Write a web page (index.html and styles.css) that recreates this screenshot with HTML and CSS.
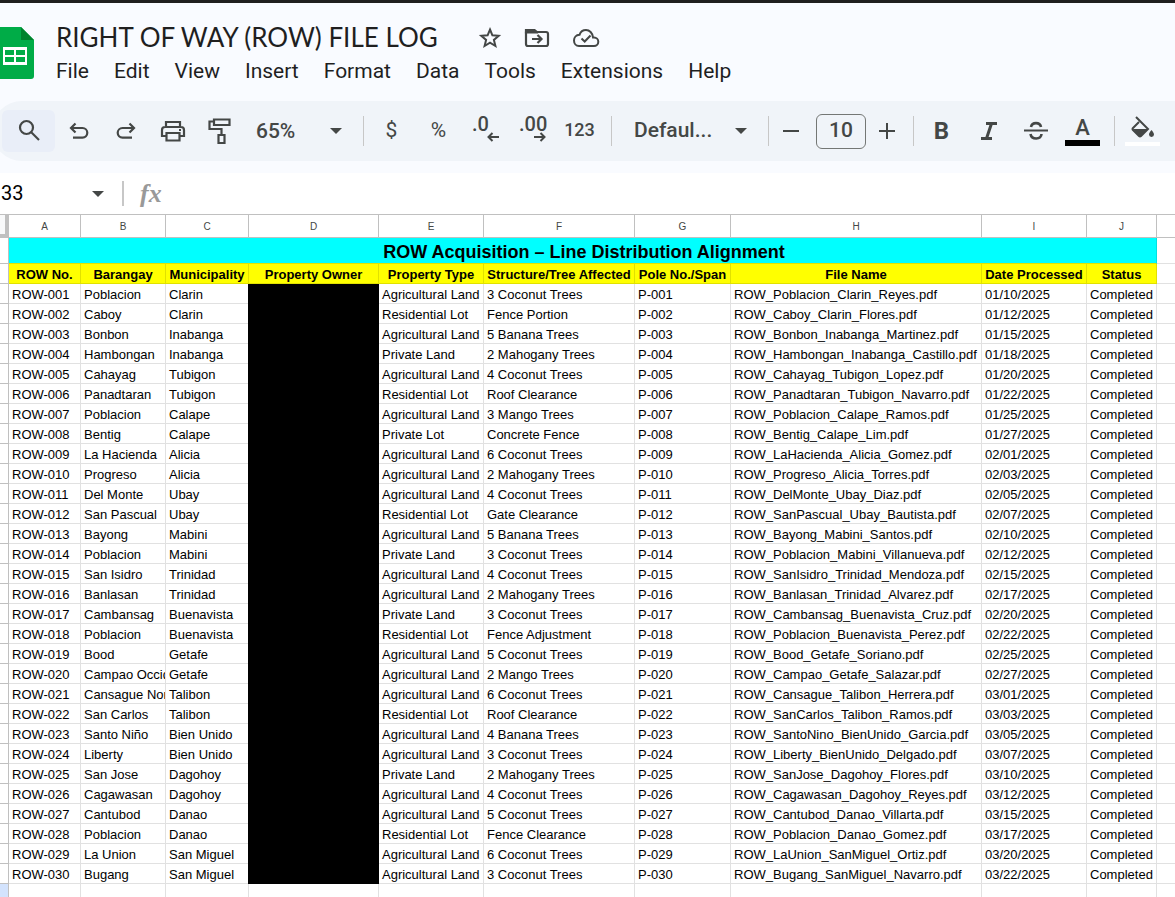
FILE: index.html
```html
<!DOCTYPE html>
<html lang="en">
<head>
    <meta charset="UTF-8">
    <meta name="viewport" content="width=device-width, initial-scale=1.0">
    <title>RIGHT OF WAY (ROW) FILE LOG</title>
    <link rel="stylesheet" href="styles.css">
</head>
<body>
    <header class="top">
        <div class="doc-bar">
            <a class="logo" href="#" aria-label="Sheets home">
                <svg width="40" height="52" viewBox="0 0 40 52">
                    <path d="M4 0H27L40 13V49Q40 52 37 52H4Q0 52 0 48V4Q0 0 4 0Z" fill="#00ac47"/>
                    <path d="M27 0L40 13H27Z" fill="#00832d"/>
                    <path d="M9 20H33V38H9ZM11 23V28H20V23ZM22 23V28H31V23ZM11 30V35H20V30ZM22 30V35H31V30Z" fill="#fff" fill-rule="evenodd"/>
                </svg>
            </a>
            <div class="doc-info">
                <div class="title-row">
                    <input class="doc-title" type="text" value="RIGHT OF WAY (ROW) FILE LOG" aria-label="Document title">
                    <button class="icon-btn" aria-label="Star">
                        <svg width="24" height="24" viewBox="0 0 24 24" fill="none" stroke="#444746" stroke-width="2"><path d="M12 3.5L14.4 9.3L20.7 9.8L15.9 13.9L17.4 20L12 16.7L6.6 20L8.1 13.9L3.3 9.8L9.6 9.3Z"/></svg>
                    </button>
                    <button class="icon-btn" aria-label="Move">
                        <svg width="26" height="24" viewBox="0 0 26 24" fill="none" stroke="#444746" stroke-width="2.200"><path d="M2 6V18Q2 20 4 20H22Q24 20 24 18V8Q24 6 22 6H13L10.500 4H4Q2 4 2 6Z"/><path d="M2 4H10L12 6.500H2Z" fill="#444746"/><path d="M8 13H17M13.500 9L17.500 13L13.500 17"/></svg>
                    </button>
                    <button class="icon-btn" aria-label="Saved to Drive">
                        <svg width="28" height="24" viewBox="0 0 28 24" fill="none" stroke="#444746" stroke-width="2"><path d="M7 20H22A4.300 4.300 0 0 0 22 11.400H21C20.500 7 17.500 4 14 4C10.500 4 8.500 6 7.500 8.800C4 9 2 11.500 2 14.500C2 17.500 4 20 7 20Z"/><path d="M9.500 12.500L12.700 15.500L18.500 9.500"/></svg>
                    </button>
                </div>
                <nav class="menu">
                    <button>File</button>
                    <button>Edit</button>
                    <button>View</button>
                    <button>Insert</button>
                    <button>Format</button>
                    <button>Data</button>
                    <button>Tools</button>
                    <button>Extensions</button>
                    <button>Help</button>
                </nav>
            </div>
        </div>

        <!-- Toolbar -->
        <div class="toolbar">
            <button class="search" aria-label="Search the menus">
                <svg width="24" height="24" viewBox="0 0 24 24" fill="none" stroke="#444746" stroke-width="2.200"><circle cx="9.500" cy="8.500" r="6.500"/><path d="M14 13L22 21"/></svg>
            </button>
            <button class="tool" aria-label="Undo">
                <svg width="24" height="24" viewBox="0 0 24 24" fill="none" stroke="#444746" stroke-width="2.200"><path d="M8.500 4.500L4 9L8.500 13.500M4 9H15.500A4.800 4.800 0 0 1 15.500 18.600H6"/></svg>
            </button>
            <button class="tool" aria-label="Redo">
                <svg width="24" height="24" viewBox="0 0 24 24" fill="none" stroke="#444746" stroke-width="2.200"><path d="M15.500 4.500L20 9L15.500 13.500M20 9H8.500A4.800 4.800 0 0 0 8.500 18.600H18"/></svg>
            </button>
            <button class="tool" aria-label="Print">
                <svg width="26" height="24" viewBox="0 0 26 24" fill="none" stroke="#444746" stroke-width="2.200"><path d="M6 8V3H20V8M6 17H2V11Q2 8 5 8H21Q24 8 24 11V17H20"/><path d="M6.500 14H19.500V21.500H6.500Z"/><path d="M19 11H21"/></svg>
            </button>
            <button class="tool" aria-label="Paint format">
                <svg width="24" height="28" viewBox="0 0 24 28" fill="none" stroke="#444746" stroke-width="2.200"><path d="M6 2.500H21.500V8H6ZM6 4.500H1.500V12H13.500V18M10.500 18H16.500V26H10.500Z"/></svg>
            </button>
            <div class="picker zoom">
                <select aria-label="Zoom"><option>65%</option></select>
                <svg class="arrow" width="12" height="6" viewBox="0 0 12 6"><path d="M0 0H12L6 6Z" fill="#444746"/></svg>
            </div>
            <span class="sep"></span>
            <button class="tool symbol">$</button>
            <button class="tool symbol">%</button>
            <button class="tool decimal" aria-label="Decrease decimal places"><span>.0</span>
                <svg width="12" height="10" viewBox="0 0 12 10" fill="none" stroke="#444746" stroke-width="2"><path d="M12 5H2M5.500 1L1.500 5L5.500 9"/></svg>
            </button>
            <button class="tool decimal" aria-label="Increase decimal places"><span>.00</span>
                <svg width="12" height="10" viewBox="0 0 12 10" fill="none" stroke="#444746" stroke-width="2"><path d="M0 5H10M6.500 1L10.500 5L6.500 9"/></svg>
            </button>
            <button class="tool format">123</button>
            <span class="sep"></span>
            <div class="picker font">
                <select aria-label="Font"><option>Defaul...</option></select>
                <svg class="arrow" width="12" height="6" viewBox="0 0 12 6"><path d="M0 0H12L6 6Z" fill="#444746"/></svg>
            </div>
            <span class="sep"></span>
            <button class="step" aria-label="Decrease font size">
                <svg width="16" height="16" viewBox="0 0 16 16" stroke="#444746" stroke-width="2"><path d="M0 8H16"/></svg>
            </button>
            <input class="size" type="text" value="10" aria-label="Font size">
            <button class="step" aria-label="Increase font size">
                <svg width="16" height="16" viewBox="0 0 16 16" stroke="#444746" stroke-width="2"><path d="M0 8H16M8 0V16"/></svg>
            </button>
            <span class="sep"></span>
            <button class="tool bold">B</button>
            <button class="tool" aria-label="Italic">
                <svg width="16" height="18" viewBox="0 0 16 18" fill="none" stroke="#444746" stroke-width="3"><path d="M5 1.500H16M0 16.500H11M10.500 1.500L5.500 16.500"/></svg>
            </button>
            <button class="tool" aria-label="Strikethrough">
                <svg width="24" height="20" viewBox="0 0 24 20" fill="none" stroke="#444746" stroke-width="2.600"><path d="M0 9.500H24" stroke-width="2"/><path d="M17 6C16 0.800 8 0.800 7 6M6.500 13C7.500 19 17 19 17.500 13"/></svg>
            </button>
            <button class="tool swatch"><span>A</span></button>
            <span class="sep"></span>
            <button class="tool swatch fill-color" aria-label="Fill color">
                <svg width="24" height="24" viewBox="0 0 24 24"><path d="M5 1L17 13L10 20Q9 21 8 20L2 14Q1 13 2 12L8 6" fill="none" stroke="#444746" stroke-width="2"/><path d="M2 13H17L10 20Q9 21 8 20Z" fill="#444746"/><path d="M20.500 14C22 16 23 17 23 18.500A2.500 2.500 0 0 1 18 18.500C18 17 19 16 20.500 14Z" fill="#444746"/></svg>
            </button>
        </div>
    </header>

    <!-- Name box and formula bar -->
    <div class="formula-bar">
        <input class="name-box" type="text" value="33" aria-label="Name box">
        <svg width="12" height="6" viewBox="0 0 12 6"><path d="M0 0H12L6 6Z" fill="#444746"/></svg>
        <span class="bar"></span>
        <label class="fx" for="formula">fx</label>
        <input class="formula" id="formula" type="text">
    </div>

    <main class="sheet">
        <table>
            <colgroup>
                <col class="w-num"><col class="w-a"><col class="w-b"><col class="w-c"><col class="w-d"><col class="w-e"><col class="w-f"><col class="w-g"><col class="w-h"><col class="w-i"><col class="w-j"><col>
            </colgroup>
            <thead>
                <tr class="letters"><th class="corner"></th><th>A</th><th>B</th><th>C</th><th>D</th><th>E</th><th>F</th><th>G</th><th>H</th><th>I</th><th>J</th><th></th></tr>
            </thead>
            <tbody>
                <tr class="heading"><th></th><td colspan="10">ROW Acquisition – Line Distribution Alignment</td><td></td></tr>
                <tr class="labels"><th></th><td>ROW No.</td><td>Barangay</td><td>Municipality</td><td>Property Owner</td><td>Property Type</td><td>Structure/Tree Affected</td><td>Pole No./Span</td><td>File Name</td><td>Date Processed</td><td>Status</td><td></td></tr>
                <tr><th></th><td>ROW-001</td><td>Poblacion</td><td>Clarin</td><td class="owner"></td><td>Agricultural Land</td><td>3 Coconut Trees</td><td>P-001</td><td>ROW_Poblacion_Clarin_Reyes.pdf</td><td>01/10/2025</td><td>Completed</td><td></td></tr>
                <tr><th></th><td>ROW-002</td><td>Caboy</td><td>Clarin</td><td class="owner"></td><td>Residential Lot</td><td>Fence Portion</td><td>P-002</td><td>ROW_Caboy_Clarin_Flores.pdf</td><td>01/12/2025</td><td>Completed</td><td></td></tr>
                <tr><th></th><td>ROW-003</td><td>Bonbon</td><td>Inabanga</td><td class="owner"></td><td>Agricultural Land</td><td>5 Banana Trees</td><td>P-003</td><td>ROW_Bonbon_Inabanga_Martinez.pdf</td><td>01/15/2025</td><td>Completed</td><td></td></tr>
                <tr><th></th><td>ROW-004</td><td>Hambongan</td><td>Inabanga</td><td class="owner"></td><td>Private Land</td><td>2 Mahogany Trees</td><td>P-004</td><td>ROW_Hambongan_Inabanga_Castillo.pdf</td><td>01/18/2025</td><td>Completed</td><td></td></tr>
                <tr><th></th><td>ROW-005</td><td>Cahayag</td><td>Tubigon</td><td class="owner"></td><td>Agricultural Land</td><td>4 Coconut Trees</td><td>P-005</td><td>ROW_Cahayag_Tubigon_Lopez.pdf</td><td>01/20/2025</td><td>Completed</td><td></td></tr>
                <tr><th></th><td>ROW-006</td><td>Panadtaran</td><td>Tubigon</td><td class="owner"></td><td>Residential Lot</td><td>Roof Clearance</td><td>P-006</td><td>ROW_Panadtaran_Tubigon_Navarro.pdf</td><td>01/22/2025</td><td>Completed</td><td></td></tr>
                <tr><th></th><td>ROW-007</td><td>Poblacion</td><td>Calape</td><td class="owner"></td><td>Agricultural Land</td><td>3 Mango Trees</td><td>P-007</td><td>ROW_Poblacion_Calape_Ramos.pdf</td><td>01/25/2025</td><td>Completed</td><td></td></tr>
                <tr><th></th><td>ROW-008</td><td>Bentig</td><td>Calape</td><td class="owner"></td><td>Private Lot</td><td>Concrete Fence</td><td>P-008</td><td>ROW_Bentig_Calape_Lim.pdf</td><td>01/27/2025</td><td>Completed</td><td></td></tr>
                <tr><th></th><td>ROW-009</td><td>La Hacienda</td><td>Alicia</td><td class="owner"></td><td>Agricultural Land</td><td>6 Coconut Trees</td><td>P-009</td><td>ROW_LaHacienda_Alicia_Gomez.pdf</td><td>02/01/2025</td><td>Completed</td><td></td></tr>
                <tr><th></th><td>ROW-010</td><td>Progreso</td><td>Alicia</td><td class="owner"></td><td>Agricultural Land</td><td>2 Mahogany Trees</td><td>P-010</td><td>ROW_Progreso_Alicia_Torres.pdf</td><td>02/03/2025</td><td>Completed</td><td></td></tr>
                <tr><th></th><td>ROW-011</td><td>Del Monte</td><td>Ubay</td><td class="owner"></td><td>Agricultural Land</td><td>4 Coconut Trees</td><td>P-011</td><td>ROW_DelMonte_Ubay_Diaz.pdf</td><td>02/05/2025</td><td>Completed</td><td></td></tr>
                <tr><th></th><td>ROW-012</td><td>San Pascual</td><td>Ubay</td><td class="owner"></td><td>Residential Lot</td><td>Gate Clearance</td><td>P-012</td><td>ROW_SanPascual_Ubay_Bautista.pdf</td><td>02/07/2025</td><td>Completed</td><td></td></tr>
                <tr><th></th><td>ROW-013</td><td>Bayong</td><td>Mabini</td><td class="owner"></td><td>Agricultural Land</td><td>5 Banana Trees</td><td>P-013</td><td>ROW_Bayong_Mabini_Santos.pdf</td><td>02/10/2025</td><td>Completed</td><td></td></tr>
                <tr><th></th><td>ROW-014</td><td>Poblacion</td><td>Mabini</td><td class="owner"></td><td>Private Land</td><td>3 Coconut Trees</td><td>P-014</td><td>ROW_Poblacion_Mabini_Villanueva.pdf</td><td>02/12/2025</td><td>Completed</td><td></td></tr>
                <tr><th></th><td>ROW-015</td><td>San Isidro</td><td>Trinidad</td><td class="owner"></td><td>Agricultural Land</td><td>4 Coconut Trees</td><td>P-015</td><td>ROW_SanIsidro_Trinidad_Mendoza.pdf</td><td>02/15/2025</td><td>Completed</td><td></td></tr>
                <tr><th></th><td>ROW-016</td><td>Banlasan</td><td>Trinidad</td><td class="owner"></td><td>Agricultural Land</td><td>2 Mahogany Trees</td><td>P-016</td><td>ROW_Banlasan_Trinidad_Alvarez.pdf</td><td>02/17/2025</td><td>Completed</td><td></td></tr>
                <tr><th></th><td>ROW-017</td><td>Cambansag</td><td>Buenavista</td><td class="owner"></td><td>Private Land</td><td>3 Coconut Trees</td><td>P-017</td><td>ROW_Cambansag_Buenavista_Cruz.pdf</td><td>02/20/2025</td><td>Completed</td><td></td></tr>
                <tr><th></th><td>ROW-018</td><td>Poblacion</td><td>Buenavista</td><td class="owner"></td><td>Residential Lot</td><td>Fence Adjustment</td><td>P-018</td><td>ROW_Poblacion_Buenavista_Perez.pdf</td><td>02/22/2025</td><td>Completed</td><td></td></tr>
                <tr><th></th><td>ROW-019</td><td>Bood</td><td>Getafe</td><td class="owner"></td><td>Agricultural Land</td><td>5 Coconut Trees</td><td>P-019</td><td>ROW_Bood_Getafe_Soriano.pdf</td><td>02/25/2025</td><td>Completed</td><td></td></tr>
                <tr><th></th><td>ROW-020</td><td>Campao Occid</td><td>Getafe</td><td class="owner"></td><td>Agricultural Land</td><td>2 Mango Trees</td><td>P-020</td><td>ROW_Campao_Getafe_Salazar.pdf</td><td>02/27/2025</td><td>Completed</td><td></td></tr>
                <tr><th></th><td>ROW-021</td><td>Cansague Nor</td><td>Talibon</td><td class="owner"></td><td>Agricultural Land</td><td>6 Coconut Trees</td><td>P-021</td><td>ROW_Cansague_Talibon_Herrera.pdf</td><td>03/01/2025</td><td>Completed</td><td></td></tr>
                <tr><th></th><td>ROW-022</td><td>San Carlos</td><td>Talibon</td><td class="owner"></td><td>Residential Lot</td><td>Roof Clearance</td><td>P-022</td><td>ROW_SanCarlos_Talibon_Ramos.pdf</td><td>03/03/2025</td><td>Completed</td><td></td></tr>
                <tr><th></th><td>ROW-023</td><td>Santo Niño</td><td>Bien Unido</td><td class="owner"></td><td>Agricultural Land</td><td>4 Banana Trees</td><td>P-023</td><td>ROW_SantoNino_BienUnido_Garcia.pdf</td><td>03/05/2025</td><td>Completed</td><td></td></tr>
                <tr><th></th><td>ROW-024</td><td>Liberty</td><td>Bien Unido</td><td class="owner"></td><td>Agricultural Land</td><td>3 Coconut Trees</td><td>P-024</td><td>ROW_Liberty_BienUnido_Delgado.pdf</td><td>03/07/2025</td><td>Completed</td><td></td></tr>
                <tr><th></th><td>ROW-025</td><td>San Jose</td><td>Dagohoy</td><td class="owner"></td><td>Private Land</td><td>2 Mahogany Trees</td><td>P-025</td><td>ROW_SanJose_Dagohoy_Flores.pdf</td><td>03/10/2025</td><td>Completed</td><td></td></tr>
                <tr><th></th><td>ROW-026</td><td>Cagawasan</td><td>Dagohoy</td><td class="owner"></td><td>Agricultural Land</td><td>4 Coconut Trees</td><td>P-026</td><td>ROW_Cagawasan_Dagohoy_Reyes.pdf</td><td>03/12/2025</td><td>Completed</td><td></td></tr>
                <tr><th></th><td>ROW-027</td><td>Cantubod</td><td>Danao</td><td class="owner"></td><td>Agricultural Land</td><td>5 Coconut Trees</td><td>P-027</td><td>ROW_Cantubod_Danao_Villarta.pdf</td><td>03/15/2025</td><td>Completed</td><td></td></tr>
                <tr><th></th><td>ROW-028</td><td>Poblacion</td><td>Danao</td><td class="owner"></td><td>Residential Lot</td><td>Fence Clearance</td><td>P-028</td><td>ROW_Poblacion_Danao_Gomez.pdf</td><td>03/17/2025</td><td>Completed</td><td></td></tr>
                <tr><th></th><td>ROW-029</td><td>La Union</td><td>San Miguel</td><td class="owner"></td><td>Agricultural Land</td><td>6 Coconut Trees</td><td>P-029</td><td>ROW_LaUnion_SanMiguel_Ortiz.pdf</td><td>03/20/2025</td><td>Completed</td><td></td></tr>
                <tr><th></th><td>ROW-030</td><td>Bugang</td><td>San Miguel</td><td class="owner"></td><td>Agricultural Land</td><td>3 Coconut Trees</td><td>P-030</td><td>ROW_Bugang_SanMiguel_Navarro.pdf</td><td>03/22/2025</td><td>Completed</td><td></td></tr>
                <tr><th class="selected"></th><td></td><td></td><td></td><td></td><td></td><td></td><td></td><td></td><td></td><td></td><td></td></tr>
            </tbody>
        </table>
    </main>
</body>
</html>
```
FILE: styles.css
```css
* {
    box-sizing: border-box;
}
body {
    display: flex;
    flex-direction: column;
    height: 100vh;
    margin: 0;
    overflow: hidden;
    background-color: #fff;
    color: #1f1f1f;
    font-family: Roboto, sans-serif;
}
button, input, select {
    margin: 0;
    padding: 0;
    border: none;
    background: none;
    color: inherit;
    font-family: inherit;
}
button {
    cursor: pointer;
}
svg {
    display: block;
    flex: none;
}

/* Header */
.top {
    flex: none;
    padding-bottom: 12px;
    border-top: 3px solid #1f1f1f;
    background-color: #f9fbff;
}
.doc-bar {
    display: flex;
    height: 98px;
}
.logo {
    margin: 24px 22px 0 -6px;
}
.doc-info {
    padding-top: 17px;
}
.title-row {
    display: flex;
    align-items: center;
    gap: 22px;
    height: 36px;
}
.doc-title {
    width: 400px;
    padding-bottom: 3px;
    font-family: Lato, sans-serif;
    font-size: 26px;
}
.menu {
    display: flex;
    gap: 25px;
}
.menu button {
    height: 30px;
    font-size: 21px;
}

/* Toolbar */
.toolbar {
    display: flex;
    align-items: center;
    height: 60px;
    margin-left: -8px;
    padding-left: 10px;
    border-radius: 30px 0 0 30px;
    background-color: #f0f4f9;
    color: #444746;
}
.search {
    display: flex;
    flex: none;
    align-items: center;
    justify-content: center;
    width: 53px;
    height: 42px;
    border-radius: 6px;
    background-color: #e9eef8;
}
.tool {
    display: flex;
    flex: none;
    align-items: center;
    justify-content: center;
    width: 47px;
    height: 42px;
    font-size: 19px;
    font-weight: 500;
}
.picker {
    position: relative;
    flex: none;
}
.picker select {
    width: 100%;
    height: 42px;
    appearance: none;
    font-size: 21px;
    font-weight: 500;
}
.zoom {
    width: 112px;
}
.zoom select {
    padding-left: 13px;
}
.font {
    width: 144px;
}
.font select {
    padding-left: 18px;
}
.font select, .size {
    padding-bottom: 2px;
}
.arrow {
    position: absolute;
    top: 18px;
    right: 13px;
    pointer-events: none;
}
.sep {
    flex: none;
    width: 1px;
    height: 30px;
    margin: 0 4px 0 8px;
    background-color: #c7c7c7;
}
.symbol {
    padding-bottom: 2px;
    font-size: 21px;
    font-weight: 400;
}
.format {
    padding-bottom: 3px;
    font-size: 18px;
}
.decimal {
    flex-direction: column;
    align-items: flex-start;
    padding: 0 10px 4px;
    font-size: 20px;
    line-height: 16px;
}
.decimal svg {
    align-self: flex-end;
}
.step {
    display: flex;
    flex: none;
    align-items: center;
    justify-content: center;
    width: 36px;
    height: 42px;
}
.size {
    flex: none;
    width: 50px;
    height: 35px;
    margin: 0 3px 0 7px;
    border: 1px solid #747775;
    border-radius: 6px;
    font-size: 21px;
    font-weight: 500;
    text-align: center;
}
.bold {
    font-size: 24px;
    font-weight: 700;
}
.swatch {
    flex-direction: column;
    justify-content: flex-end;
    height: 30px;
    font-size: 22px;
    line-height: 24px;
}
.swatch::after {
    content: "";
    width: 35px;
    height: 6px;
    background-color: #000;
}
.fill-color svg {
    margin-bottom: 2px;
}
.fill-color::after {
    background-color: #fff;
}

/* Formula bar */
.formula-bar {
    display: flex;
    flex: none;
    align-items: center;
    height: 41px;
    color: #000;
}
.name-box {
    width: 92px;
    padding: 0 0 2px 1px;
    font-size: 20px;
}
.bar {
    width: 2px;
    height: 25px;
    margin: 0 16px 0 18px;
    background-color: #c7c7c7;
}
.fx {
    color: #999;
    font-family: "Liberation Serif", serif;
    font-size: 26px;
    font-style: italic;
    font-weight: bold;
}
.formula {
    flex: 1;
}

/* Grid */
.sheet {
    flex: 1;
    overflow: hidden;
    border-top: 1px solid #c0c0c0;
}
table {
    width: 100%;
    table-layout: fixed;
    border-spacing: 0;
    color: #000;
    font-family: "Liberation Sans", Arial, sans-serif;
    font-size: 13px;
    line-height: 16px;
}
th, td {
    height: 20px;
    padding: 3px 0 0 3px;
    border-right: 1px solid #e1e1e1;
    border-bottom: 1px solid #e1e1e1;
    overflow: hidden;
    white-space: nowrap;
    text-align: left;
}
th {
    border-color: #c0c0c0;
}
.w-num { width: 9px; }
.w-a { width: 72px; }
.w-b { width: 85px; }
.w-c { width: 83px; }
.w-d { width: 130px; }
.w-e { width: 105px; }
.w-f { width: 151px; }
.w-g { width: 96px; }
.w-h { width: 251px; }
.w-i { width: 105px; }
.w-j { width: 70px; }
.letters th {
    height: 23px;
    padding: 1px 0 0;
    color: #444746;
    font-size: 10px;
    font-weight: normal;
    text-align: center;
}
.letters .corner {
    border-right: 4px solid #c0c0c0;
    border-bottom: 4px solid #c0c0c0;
    background-color: #f8f9fa;
}
.heading td {
    height: 26px;
    font-size: 18px;
    font-weight: bold;
    line-height: 20px;
    text-align: center;
}
.heading td[colspan] {
    border-color: #00e1e1;
    border-bottom-color: #e1e100;
    background-color: #00ffff;
}
.labels td {
    padding: 3px 0 0;
    font-weight: bold;
    text-align: center;
}
.labels td:not(:last-child) {
    border-color: #e1e100;
    background-color: #ffff00;
}
td.owner {
    border-color: #000;
    background-color: #000;
    box-shadow: -1px 0 0 #000;
}
.selected {
    background-color: #d3e3fd;
}
td:last-child, .letters th:last-child {
    border-right: none;
}
```
